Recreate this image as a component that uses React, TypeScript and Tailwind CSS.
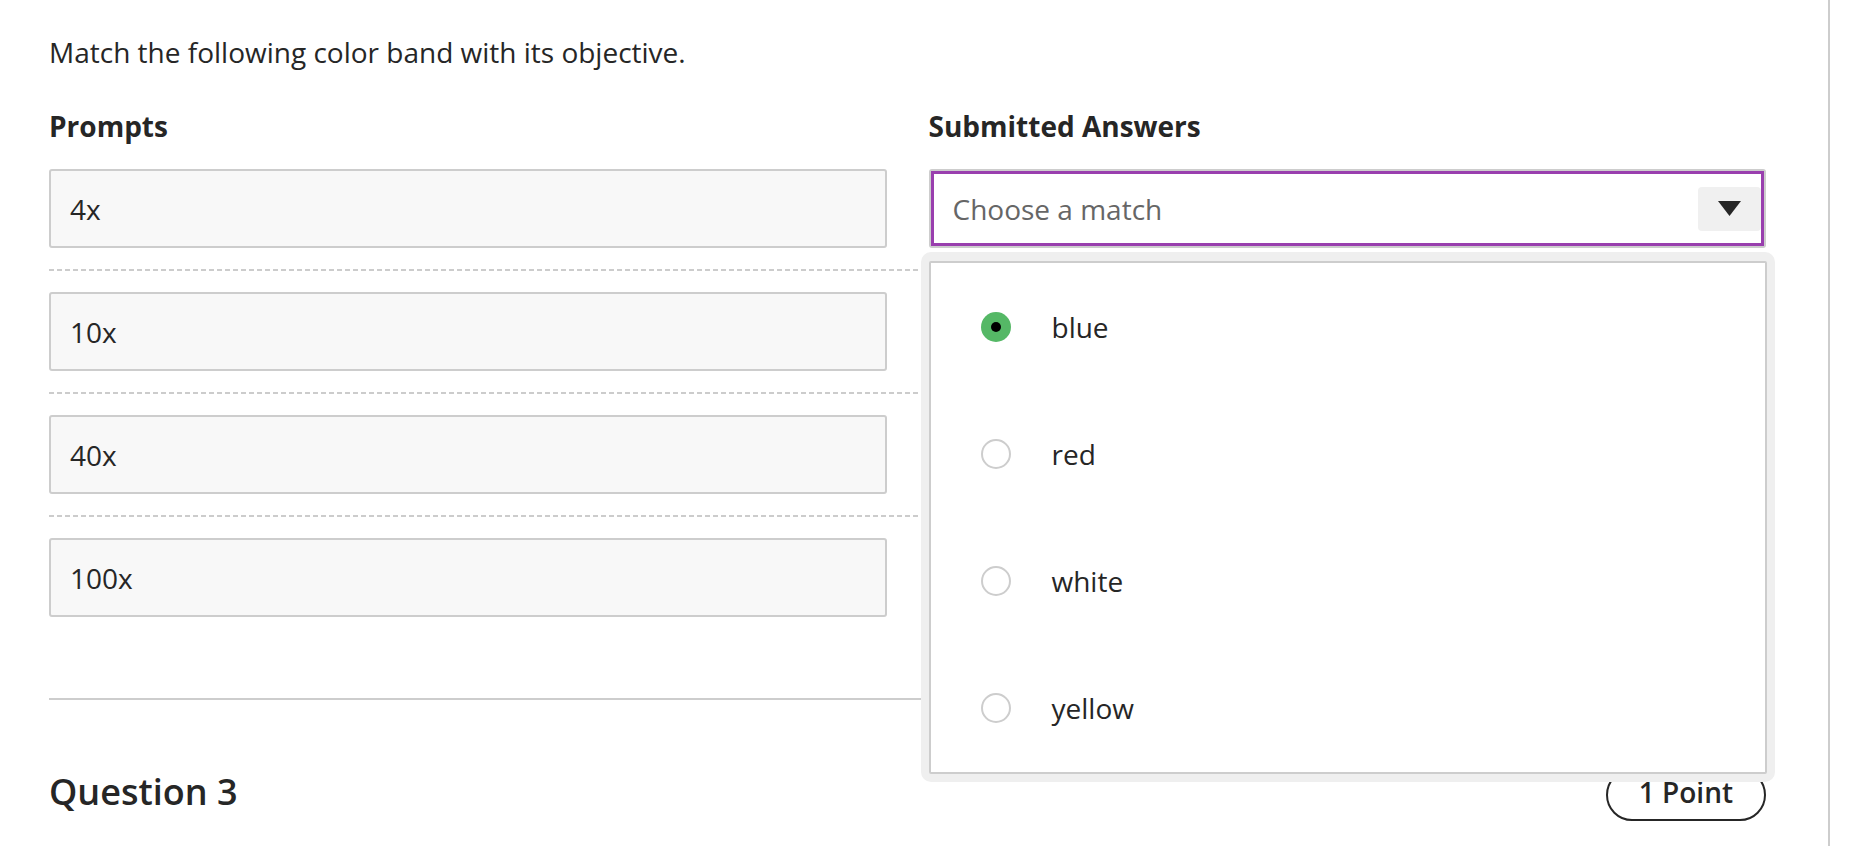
import React from "react";

function Select({ focused }: { focused: boolean }) {
  return (
    <div className={focused ? "h-[79px] rounded-[3px] border-2 border-[#cdcdcd] bg-white" : "invisible h-[79px] rounded-[3px] border-2 border-[#cdcdcd] bg-white"}>
      <div
        className={
          focused
            ? "flex h-full items-center justify-between border-[3.5px] border-[#993fae] pl-[19px]"
            : "flex h-full items-center justify-between border-[3.5px] border-transparent pl-[19px]"
        }
      >
        <span className="text-[28px] leading-[42px] text-[#666666]">Choose a match</span>
        <div className="flex h-[44px] w-[63px] items-center justify-center rounded-[4px] bg-[#f0f0f0]">
          <svg width="23" height="15" viewBox="0 0 23 15">
            <polygon points="0,0 23,0 11.5,15" fill="#262626" />
          </svg>
        </div>
      </div>
    </div>
  );
}

function Dropdown() {
  const options = ["blue", "red", "white", "yellow"];
  return (
    <div className="absolute left-[-8px] right-[-9px] top-[83px] z-10 h-[530px] rounded-[10px] bg-[#efefef] px-[8px] pb-[8px] pt-[9px]">
      <div className="flex h-full flex-col rounded-[2px] border-2 border-[#cdcdcd] bg-white">
        {options.map((o, i) => (
          <div key={o} className="flex flex-1 items-center gap-[41px] pl-[50px]">
            {i === 0 ? (
              <span className="flex h-[30px] w-[30px] items-center justify-center rounded-full bg-[#55b866]">
                <span className="h-[10px] w-[10px] rounded-full bg-black" />
              </span>
            ) : (
              <span className="h-[30px] w-[30px] rounded-full border-2 border-[#cdcdcd] bg-white" />
            )}
            <span className="text-[28px] leading-[42px] text-[#262626]">{o}</span>
          </div>
        ))}
      </div>
    </div>
  );
}

export default function App() {
  const prompts = ["4x", "10x", "40x", "100x"];
  return (
    <div className="h-[846px] w-[1870px] overflow-hidden bg-white font-['Open_Sans',sans-serif] text-[#262626]">
      <div className="h-full w-[1830px] border-r-2 border-[#cdcdcd] pl-[49px] pr-[62px] pt-[31px]">
        <p className="text-[28px] leading-[42px]">Match the following color band with its objective.</p>
        <div className="mt-[33px] grid grid-cols-2 gap-x-[42px]">
          <h3 className="text-[28px] font-bold leading-[41px]">Prompts</h3>
          <h3 className="text-[28px] font-bold leading-[41px]">Submitted Answers</h3>
        </div>
        <div className="mt-[22px]">
          {prompts.map((p, i) => (
            <div key={p}>
              {i > 0 && (
                <div className="py-[21px]">
                  <div className="h-[2px] bg-[image:repeating-linear-gradient(90deg,#cccccc_0px,#cccccc_5px,transparent_5px,transparent_8px)]" />
                </div>
              )}
              <div className="grid grid-cols-2 gap-x-[42px]">
                <div className="flex h-[79px] items-center rounded-[3px] border-2 border-[#cdcdcd] bg-[#f8f8f8] pl-[19px] text-[28px] leading-[42px]">
                  {p}
                </div>
                <div className="relative">
                  <Select focused={i === 0} />
                  {i === 0 && <Dropdown />}
                </div>
              </div>
            </div>
          ))}
        </div>
        <div className="mt-[81px] h-[2px] bg-[#cdcdcd]" />
        <div className="mt-[69px] flex items-start justify-between">
          <h2 className="text-[36px] font-semibold leading-[46px]">Question 3</h2>
          <div className="flex h-[52px] items-center rounded-full border-2 border-[#262626] px-[31px] pb-[6px] text-[28px] font-semibold leading-[42px]">
            1 Point
          </div>
        </div>
      </div>
    </div>
  );
}
